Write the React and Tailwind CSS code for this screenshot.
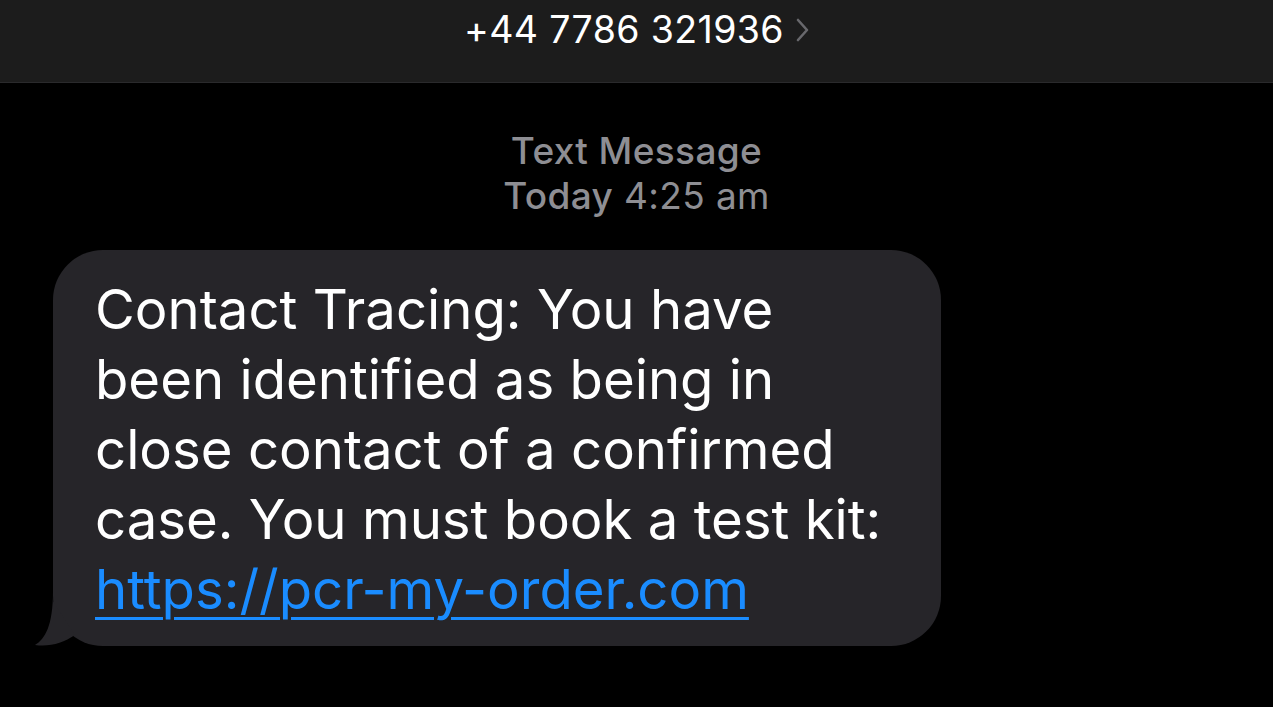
const LINES = [
  'Contact Tracing: You have',
  'been identified as being in',
  'close contact of a confirmed',
  'case. You must book a test kit:',
]

function BubbleTail() {
  return (
    <svg
      className="absolute -left-[20px] bottom-0"
      width="60"
      height="60"
      viewBox="0 0 60 60"
      aria-hidden="true"
    >
      <path d="M20 5 C20 40 12 53 2 59 C17 61 30 57 42 49 L20 15 Z" fill="#262529" />
    </svg>
  )
}

export default function App() {
  return (
    <div
      className="min-h-screen w-full bg-black text-white antialiased"
      style={{ fontFamily: 'Inter, "Noto Sans", sans-serif' }}
    >
      <header className="flex h-[83px] justify-center border-b border-[#2a2a2c] bg-[#1c1c1c] pt-[8px]">
        <div className="flex h-[44px] items-center gap-[12px]">
          <span className="text-[37.5px] leading-none tracking-[0.01em]">+44 7786 321936</span>
          <svg width="13" height="24" viewBox="0 0 13 24" aria-hidden="true">
            <path d="M2 2 L11 12 L2 22" fill="none" stroke="#68686c" strokeWidth="2.6" strokeLinecap="round" strokeLinejoin="round" />
          </svg>
        </div>
      </header>

      <div className="flex flex-col items-center pt-[45px] text-[37px] leading-[45px] text-[#8e8e93]">
        <span className="font-medium tracking-[0.01em]">Text Message</span>
        <span className="tracking-[0.01em]">
          <span className="font-medium">Today</span> 4:25 am
        </span>
      </div>

      <div className="relative ml-[53px] mt-[32px] w-[888px] rounded-[50px] bg-[#262529] pl-[42px] pt-[24px] pb-[22px]">
        <p className="text-[54.5px] leading-[70px] whitespace-nowrap">
          {LINES.map((line) => (
            <span key={line} className="block">
              {line}
            </span>
          ))}
          <a href="#" className="block text-[#1a8cff] underline decoration-[3px] underline-offset-[8px]">
            https://pcr-my-order.com
          </a>
        </p>
        <BubbleTail />
      </div>
    </div>
  )
}
